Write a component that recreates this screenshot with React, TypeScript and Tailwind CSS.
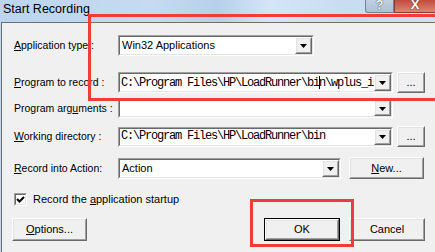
import React from "react";

function Raised({
  className = "",
  innerClassName = "",
  children,
}: {
  className?: string;
  innerClassName?: string;
  children?: React.ReactNode;
}) {
  return (
    <div
      className={
        "border border-t-white border-l-white border-r-[#696969] border-b-[#696969] " +
        className
      }
    >
      <div
        className={
          "w-full h-full border border-t-[#e3e3e3] border-l-[#e3e3e3] border-r-[#a0a0a0] border-b-[#a0a0a0] bg-[#f0f0f0] flex items-center justify-center " +
          innerClassName
        }
      >
        {children}
      </div>
    </div>
  );
}

function Sunken({
  className = "",
  children,
}: {
  className?: string;
  children?: React.ReactNode;
}) {
  return (
    <div
      className={
        "border border-t-[#a0a0a0] border-l-[#a0a0a0] border-r-white border-b-white " +
        className
      }
    >
      <div className="w-full h-full border border-t-[#696969] border-l-[#696969] border-r-[#e3e3e3] border-b-[#e3e3e3] bg-white flex items-stretch overflow-hidden">
        {children}
      </div>
    </div>
  );
}

function Arrow() {
  return (
    <Raised className="w-[17px] shrink-0">
      <svg width="7" height="4" viewBox="0 0 7 4" className="mt-[1px]">
        <path d="M0 0H7L3.5 4Z" fill="#000" />
      </svg>
    </Raised>
  );
}

function Combo({
  className = "",
  children,
}: {
  className?: string;
  children?: React.ReactNode;
}) {
  return (
    <Sunken className={className}>
      <div className="flex-1 min-w-0 overflow-hidden whitespace-nowrap flex items-center">
        {children}
      </div>
      <Arrow />
    </Sunken>
  );
}

const mono = "font-['Liberation_Mono',monospace] text-[12px] tracking-[-1.2px] pl-[1px]";
const label = "w-[104px] pl-[12px] box-content text-[10.5px]";

export default function App() {
  return (
    <div className="relative w-[435px] h-[252px] overflow-hidden bg-[#c3d8ef] font-['Liberation_Sans',Arial,sans-serif] text-[11px] leading-[13px] text-black">
      {/* title bar */}
      <div className="h-[22px] flex items-start bg-[linear-gradient(90deg,#bcd4ee_0%,#c6dbf1_35%,#b7cfea_50%,#d5e5f7_62%,#c8dcf2_80%,#cde0f5_100%)]">
        <div className="pl-[3px] pt-[2px] text-[12.5px] leading-[15px] text-black">
          Start Recording
        </div>
        <div className="ml-auto flex">
          <div className="w-[29px] h-[13px] border border-t-0 border-[#71839a] rounded-bl-[3px] bg-[linear-gradient(180deg,#c0d0e2,#aebfd4)] flex justify-center overflow-hidden">
            <span className="text-[13px] leading-[10px] font-bold text-[#f4f6f9] [text-shadow:0_0_1px_#3a4a60,0_0_1px_#3a4a60]">
              ?
            </span>
          </div>
          <div className="w-[41px] h-[13px] border border-t-0 border-r-0 border-[#8a3a30] bg-[linear-gradient(180deg,#c34c3e,#d98676)] flex justify-center overflow-hidden">
            <span className="text-[13px] leading-[9px] font-bold text-white [text-shadow:0_0_1px_#5a1a10,0_0_1px_#5a1a10]">
              X
            </span>
          </div>
        </div>
      </div>

      {/* client */}
      <div className="ml-[1px] h-[230px] border-l border-t border-[#6e6e6e] bg-[#f0f0f0] flex flex-col">
        {/* row 1 */}
        <div className="mt-[12px] flex items-center">
          <div className={label}>
            <span className="underline">A</span>pplication type :
          </div>
          <Combo className="w-[196px] h-[21px]">
            <span className="pl-[2px]">Win32 Applications</span>
          </Combo>
        </div>

        {/* row 2 */}
        <div className="mt-[16px] flex items-center">
          <div className={label}>
            <span className="underline">P</span>rogram to record :
          </div>
          <Combo className="w-[275px] h-[21px]">
            <span className={mono}>
              {"C:\\Program Files\\HP\\LoadRunner\\bi"}
              <span className="inline-block w-px h-[13px] bg-black align-middle -mr-px" />
              {"n\\wplus_init_wsock.exe"}
            </span>
          </Combo>
          <Raised className="ml-[4px] w-[28px] h-[21px]">
            <span className="text-[11px] leading-[11px]">...</span>
          </Raised>
        </div>

        {/* row 3 */}
        <div className="mt-[5px] flex items-center">
          <div className={label}>
            Program arg<span className="underline">u</span>ments :
          </div>
          <Combo className="w-[275px] h-[20px]" />
        </div>

        {/* row 4 */}
        <div className="mt-[8px] flex items-center">
          <div className={label}>
            <span className="underline">W</span>orking directory :
          </div>
          <Combo className="w-[275px] h-[20px]">
            <span className={mono}>{"C:\\Program Files\\HP\\LoadRunner\\bin"}</span>
          </Combo>
          <Raised className="ml-[4px] w-[28px] h-[21px]">
            <span className="text-[11px] leading-[11px]">...</span>
          </Raised>
        </div>

        {/* row 5 */}
        <div className="mt-[10px] flex items-center">
          <div className={label}>
            <span className="underline">R</span>ecord into Action:
          </div>
          <Combo className="w-[223px] h-[21px]">
            <span className="pl-[2px]">Action</span>
          </Combo>
          <Raised className="ml-[8px] w-[75px] h-[22px]">
            <span>
              <span className="underline">N</span>ew...
            </span>
          </Raised>
        </div>

        {/* checkbox */}
        <div className="mt-[14px] ml-[12px] flex items-center">
          <Sunken className="w-[13px] h-[13px]">
            <svg width="9" height="9" viewBox="0 0 9 9" className="m-auto">
              <path d="M1 4L3.5 6.5L8 2" stroke="#000" strokeWidth="2" fill="none" />
            </svg>
          </Sunken>
          <span className="ml-[6px]">
            Record the <span className="underline">a</span>pplication startup
          </span>
        </div>

        {/* buttons */}
        <div className="mt-[12px] flex items-center">
          <Raised className="ml-[10px] w-[75px] h-[23px]">
            <span>
              <span className="underline">O</span>ptions...
            </span>
          </Raised>
          <div className="ml-auto flex">
            <div className="border border-black">
              <Raised className="w-[74px] h-[21px]">
                <span>OK</span>
              </Raised>
            </div>
            <Raised className="ml-[9px] mr-[10px] w-[76px] h-[23px]">
              <span>Cancel</span>
            </Raised>
          </div>
        </div>
      </div>

      {/* red annotations */}
      <div className="absolute left-[88px] top-[14px] w-[400px] h-[87px] border-[3px] border-[#f33b3b]" />
      <div className="absolute left-[250px] top-[199px] w-[104px] h-[48px] border-[3px] border-[#f33b3b]" />
    </div>
  );
}
